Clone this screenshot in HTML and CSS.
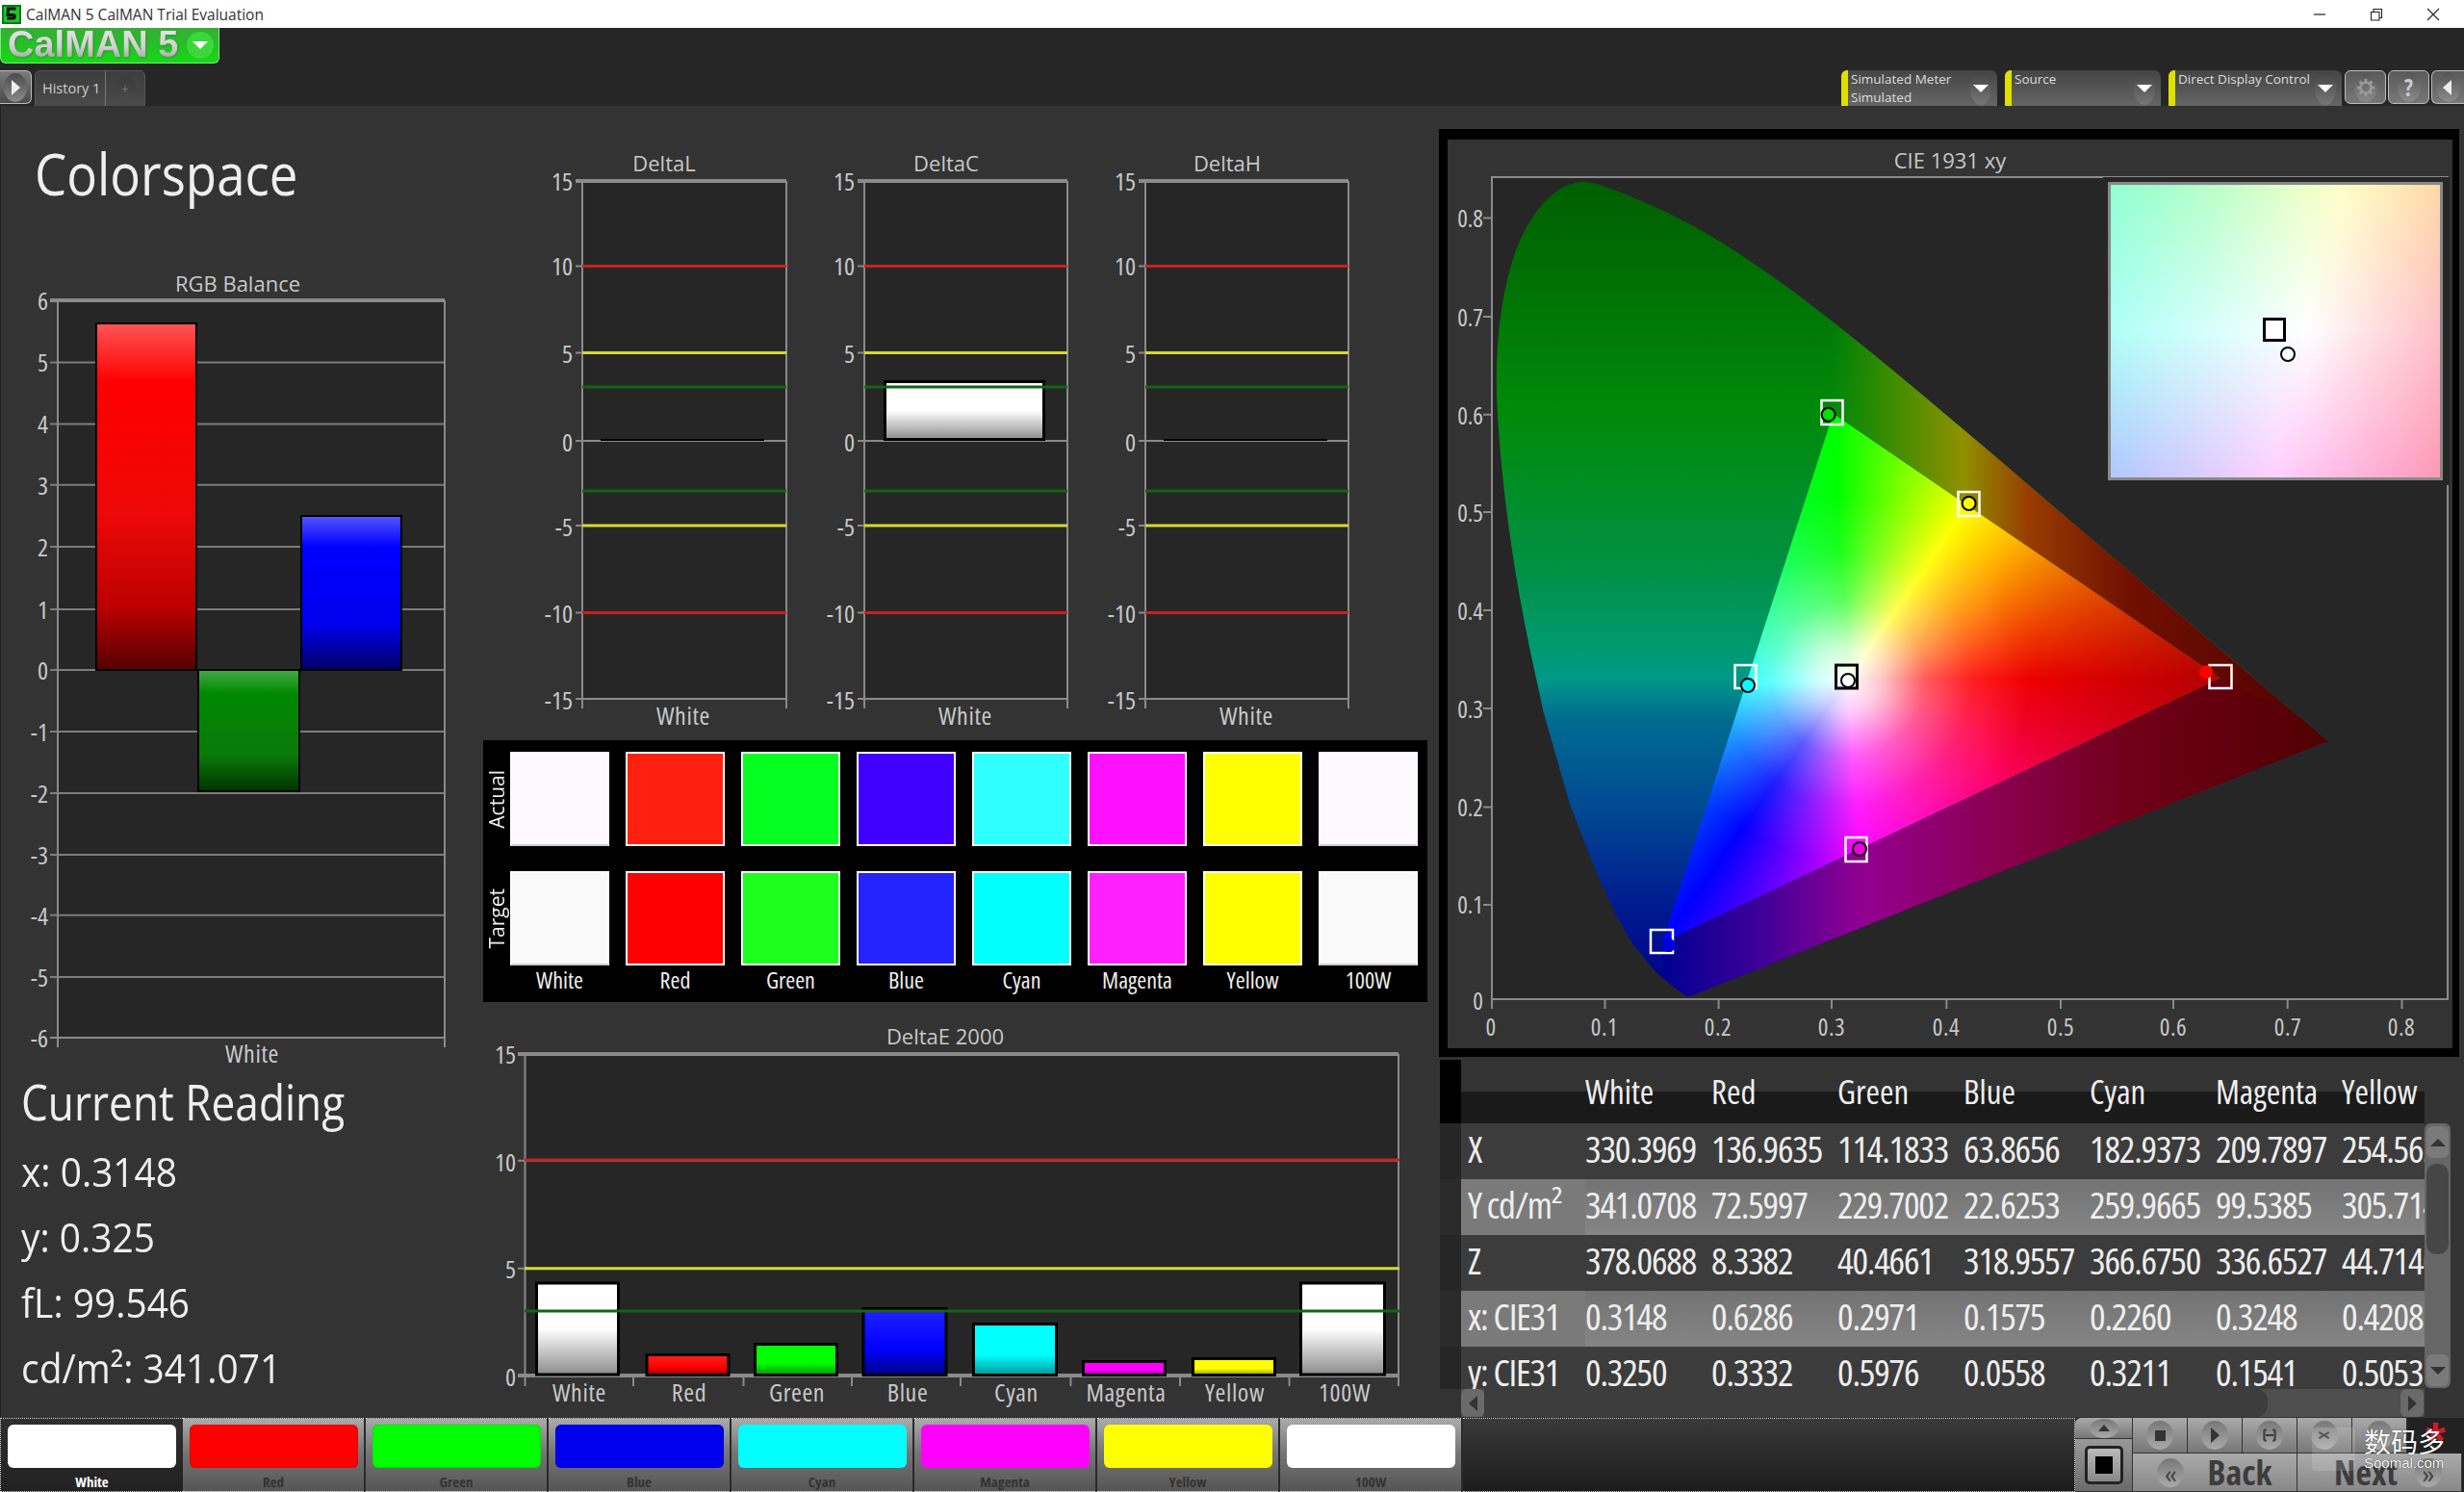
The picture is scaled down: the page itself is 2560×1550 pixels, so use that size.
FILE: index.html
```html
<!DOCTYPE html>
<html lang="en">
<head>
<meta charset="utf-8">
<title>CalMAN 5 CalMAN Trial Evaluation</title>
<link rel="stylesheet" href="styles.css">
</head>
<body>
<svg class="defs" aria-hidden="true">
  <defs>
    <linearGradient id="barRed" x1="0" y1="0" x2="0" y2="1"><stop offset="0" stop-color="#f55"/><stop offset=".17" stop-color="#f00"/><stop offset=".55" stop-color="#ee0808"/><stop offset=".82" stop-color="#b00"/><stop offset="1" stop-color="#500"/></linearGradient>
    <linearGradient id="barGreen" x1="0" y1="0" x2="0" y2="1"><stop offset="0" stop-color="#4a4"/><stop offset=".2" stop-color="#080"/><stop offset=".7" stop-color="#0a7a0a"/><stop offset="1" stop-color="#030"/></linearGradient>
    <linearGradient id="barBlue" x1="0" y1="0" x2="0" y2="1"><stop offset="0" stop-color="#55f"/><stop offset=".2" stop-color="#00f"/><stop offset=".7" stop-color="#00e"/><stop offset="1" stop-color="#006"/></linearGradient>
    <linearGradient id="barWhite" x1="0" y1="0" x2="0" y2="1"><stop offset="0" stop-color="#fff"/><stop offset=".5" stop-color="#fff"/><stop offset="1" stop-color="#8c8c8c"/></linearGradient>
    <linearGradient id="eRed" x1="0" y1="0" x2="0" y2="1"><stop offset="0" stop-color="#f22"/><stop offset=".6" stop-color="#f00"/><stop offset="1" stop-color="#900"/></linearGradient>
    <linearGradient id="eGreen" x1="0" y1="0" x2="0" y2="1"><stop offset="0" stop-color="#0f0"/><stop offset=".6" stop-color="#0f0"/><stop offset="1" stop-color="#090"/></linearGradient>
    <linearGradient id="eBlue" x1="0" y1="0" x2="0" y2="1"><stop offset="0" stop-color="#22f"/><stop offset=".6" stop-color="#00f"/><stop offset="1" stop-color="#008"/></linearGradient>
    <linearGradient id="eCyan" x1="0" y1="0" x2="0" y2="1"><stop offset="0" stop-color="#0ff"/><stop offset=".6" stop-color="#0ff"/><stop offset="1" stop-color="#099"/></linearGradient>
    <linearGradient id="eMag" x1="0" y1="0" x2="0" y2="1"><stop offset="0" stop-color="#f0f"/><stop offset=".6" stop-color="#f0f"/><stop offset="1" stop-color="#909"/></linearGradient>
    <linearGradient id="eYel" x1="0" y1="0" x2="0" y2="1"><stop offset="0" stop-color="#ff0"/><stop offset=".6" stop-color="#ff0"/><stop offset="1" stop-color="#990"/></linearGradient>

    <linearGradient id="ciLeft" gradientUnits="userSpaceOnUse" x1="0" y1="189" x2="0" y2="1035">
      <stop offset="0" stop-color="#005e00"/><stop offset=".285" stop-color="#008a0a"/><stop offset=".465" stop-color="#009040"/><stop offset=".575" stop-color="#009a70"/><stop offset=".61" stop-color="#009888"/><stop offset=".66" stop-color="#006c90"/><stop offset=".765" stop-color="#004a92"/><stop offset=".885" stop-color="#001c90"/><stop offset="1" stop-color="#000088"/>
    </linearGradient>
    <linearGradient id="ciUpper" gradientUnits="userSpaceOnUse" x1="1900" y1="0" x2="2420" y2="0">
      <stop offset="0" stop-color="#2a8a00" stop-opacity="0"/><stop offset=".12" stop-color="#3a8c00"/><stop offset=".27" stop-color="#909000"/><stop offset=".4" stop-color="#983c00"/><stop offset=".6" stop-color="#701000"/><stop offset="1" stop-color="#500000"/>
    </linearGradient>
    <linearGradient id="ciLower" gradientUnits="userSpaceOnUse" x1="1727" y1="0" x2="2420" y2="0">
      <stop offset="0" stop-color="#000090"/><stop offset=".15" stop-color="#40009a"/><stop offset=".3" stop-color="#920090"/><stop offset=".5" stop-color="#8c0050"/><stop offset=".7" stop-color="#700018"/><stop offset="1" stop-color="#500000"/>
    </linearGradient>
    <radialGradient id="redShade" gradientUnits="userSpaceOnUse" cx="2306.5" cy="704.4" r="260">
      <stop offset="0" stop-color="#000" stop-opacity=".3"/><stop offset="1" stop-color="#000" stop-opacity="0"/>
    </radialGradient>
    <clipPath id="locus">
      <path transform="translate(1550 1040) scale(1182 -1017)" d="M.1741 .005L.1714 .0051L.1644 .0109L.1566 .0177L.144 .0297L.1241 .0578L.1096 .0868L.0913 .1327L.0687 .2007L.0454 .295L.03445 .35385Q.0235 .4127 .01585 .47555Q.0082 .5384 .0051 .5966Q.002 .6548 .008 .7025Q.0139 .7502 .0264 .7811Q.0389 .812 .0566 .827Q.0743 .842 .09425 .834Q.1142 .8262 .13445 .816Q.1547 .8059 .1738 .79375Q.1929 .7816 .21125 .76795Q.2296 .7543 .2658 .7243L.3016 .6923L.3373 .6589L.3731 .6245L.4441 .5547L.5125 .4866L.5752 .4242L.627 .3725L.6658 .334L.6915 .3083L.719 .2809L.7347 .2653Z"/>
    </clipPath>
    <clipPath id="gamutClip">
      <polygon points="2306.5,704.4 1904.6,429.8 1727.3,979"/>
    </clipPath>
  </defs>
</svg>

<header class="titlebar">
  <svg class="app-icon" viewBox="0 0 20 20"><rect width="20" height="20" fill="#0a7a12"/><rect x="2" y="2" width="16" height="16" fill="#23c42b"/><path d="M14.5 4H6.5L6 10.5H11.5a1.8 1.8 0 0 1 0 3.6H5.5" fill="none" stroke="#04140a" stroke-width="3"/></svg>
  <span class="title-text">CalMAN 5 CalMAN Trial Evaluation</span>
  <div class="win-controls">
    <svg viewBox="0 0 14 14"><path d="M1 7H13" stroke="#222" stroke-width="1.2"/></svg>
    <svg viewBox="0 0 14 14"><path d="M1.5 4.5H10V13H1.5ZM4 4.5V1.5H12.5V10.5H10" fill="none" stroke="#222" stroke-width="1.1"/></svg>
    <svg viewBox="0 0 14 14"><path d="M1 1L13 13M13 1L1 13" stroke="#222" stroke-width="1.1"/></svg>
  </div>
</header>

<section class="topbar">
  <div class="top-left">
    <div class="logo">
      <span class="logo-text">CalMAN 5</span>
      <span class="drop-round"><span class="tri-down"></span></span>
    </div>
    <div class="tabs">
      <div class="round-tab play-tab"><span class="knob"><span class="tri-right"></span></span></div>
      <div class="history-tab">
        <span class="history-name">History 1</span>
        <span class="history-add"><span class="knob small">+</span></span>
      </div>
    </div>
  </div>
  <div class="top-tools">
    <div class="tool-select w162"><span class="tool-flag"></span><span class="tool-text">Simulated Meter<br>Simulated</span><span class="knob"><span class="tri-down"></span></span></div>
    <div class="tool-select w162"><span class="tool-flag"></span><span class="tool-text">Source</span><span class="knob"><span class="tri-down"></span></span></div>
    <div class="tool-select w180"><span class="tool-flag"></span><span class="tool-text">Direct Display Control</span><span class="knob"><span class="tri-down"></span></span></div>
    <div class="icon-btn"><span class="knob"><svg viewBox="0 0 24 24" class="gear"><circle cx="12" cy="12" r="6" fill="none" stroke="#999" stroke-width="3"/><path d="M12 2V6M12 18V22M2 12H6M18 12H22M5 5L8 8M16 16L19 19M19 5L16 8M8 16L5 19" stroke="#999" stroke-width="3"/></svg></span></div>
    <div class="icon-btn"><span class="knob qmark">?</span></div>
    <div class="icon-btn last"><span class="knob"><span class="tri-left"></span></span></div>
  </div>
</section>

<main class="main">
  <section class="col-left">
    <h1 class="page-title">Colorspace</h1>
    <svg class="chart" viewBox="0 270 500 840" width="500" height="840">
      <text class="c-title" x="247" y="303">RGB Balance</text>
      <rect class="plot" x="60" y="312" width="402" height="766"/>
      <path class="grid" d="M52 376.4H462M52 440.6H462M52 503.7H462M52 567.9H462M52 633H462M52 696H462M52 760H462M52 824H462M52 888H462M52 950.7H462M52 1015H462"/>
      <path class="frame" d="M52 1078H462M60 312V1088M462 312V1088"/>
      <path class="frame top" d="M52 312H462"/>
      <rect class="bar" x="100" y="336" width="104" height="360" fill="url(#barRed)"/>
      <rect class="bar" x="206" y="696" width="105" height="126" fill="url(#barGreen)"/>
      <rect class="bar" x="313" y="536" width="104" height="160" fill="url(#barBlue)"/>
      <text class="tick" x="50" y="322">6</text>
      <text class="tick" x="50" y="386">5</text>
      <text class="tick" x="50" y="450">4</text>
      <text class="tick" x="50" y="514">3</text>
      <text class="tick" x="50" y="578">2</text>
      <text class="tick" x="50" y="643">1</text>
      <text class="tick" x="50" y="706">0</text>
      <text class="tick" x="50" y="770">-1</text>
      <text class="tick" x="50" y="834">-2</text>
      <text class="tick" x="50" y="898">-3</text>
      <text class="tick" x="50" y="961">-4</text>
      <text class="tick" x="50" y="1025">-5</text>
      <text class="tick" x="50" y="1088">-6</text>
      <text class="x-label" x="262" y="1104">White</text>
    </svg>
    <h2 class="reading-title">Current Reading</h2>
    <ul class="reading">
      <li>x: 0.3148</li>
      <li>y: 0.325</li>
      <li>fL: 99.546</li>
      <li>cd/m²: 341.071</li>
    </ul>
  </section>

  <section class="col-mid">
    <svg class="chart" viewBox="500 110 990 659" width="990" height="659">
      <g>
        <text class="c-title" x="690" y="178">DeltaL</text>
        <rect class="plot" x="605" y="188" width="212" height="538"/>
        <path class="frame" d="M598 276.4H605M598 366.6H605M598 458H817M598 636.6H605M598 546H605M598 726H817M605 188V736M817 188V736"/>
        <path class="frame top" d="M598 188H817"/>
        <path class="stk-red" d="M605 276.4H817M605 636.6H817"/>
        <path class="stk-yel" d="M605 366.6H817M605 546H817"/>
        <path class="stk-grn" d="M605 402H817M605 510H817"/>
        <path class="stk-blk" d="M624 457H794"/>
        <text class="tick" x="595" y="198">15</text>
        <text class="tick" x="595" y="286">10</text>
        <text class="tick" x="595" y="377">5</text>
        <text class="tick" x="595" y="469">0</text>
        <text class="tick" x="595" y="557">-5</text>
        <text class="tick" x="595" y="647">-10</text>
        <text class="tick" x="595" y="737">-15</text>
        <text class="x-label" x="710" y="753">White</text>
      </g>
      <g>
        <text class="c-title" x="983" y="178">DeltaC</text>
        <rect class="plot" x="898" y="188" width="211" height="538"/>
        <path class="frame" d="M891 276.4H898M891 366.6H898M891 458H1109M891 636.6H898M891 546H898M891 726H1109M898 188V736M1109 188V736"/>
        <path class="frame top" d="M891 188H1109"/>
        <rect class="bar thick" x="919.5" y="396.5" width="165" height="60" fill="url(#barWhite)"/>
        <path class="stk-red" d="M898 276.4H1109M898 636.6H1109"/>
        <path class="stk-yel" d="M898 366.6H1109M898 546H1109"/>
        <path class="stk-grn" d="M898 402H1109M898 510H1109"/>
        <text class="tick" x="888" y="198">15</text>
        <text class="tick" x="888" y="286">10</text>
        <text class="tick" x="888" y="377">5</text>
        <text class="tick" x="888" y="469">0</text>
        <text class="tick" x="888" y="557">-5</text>
        <text class="tick" x="888" y="647">-10</text>
        <text class="tick" x="888" y="737">-15</text>
        <text class="x-label" x="1003" y="753">White</text>
      </g>
      <g>
        <text class="c-title" x="1275" y="178">DeltaH</text>
        <rect class="plot" x="1190" y="188" width="211" height="538"/>
        <path class="frame" d="M1183 276.4H1190M1183 366.6H1190M1183 458H1401M1183 636.6H1190M1183 546H1190M1183 726H1401M1190 188V736M1401 188V736"/>
        <path class="frame top" d="M1183 188H1401"/>
        <path class="stk-red" d="M1190 276.4H1401M1190 636.6H1401"/>
        <path class="stk-yel" d="M1190 366.6H1401M1190 546H1401"/>
        <path class="stk-grn" d="M1190 402H1401M1190 510H1401"/>
        <path class="stk-blk" d="M1209 457H1379"/>
        <text class="tick" x="1180" y="198">15</text>
        <text class="tick" x="1180" y="286">10</text>
        <text class="tick" x="1180" y="377">5</text>
        <text class="tick" x="1180" y="469">0</text>
        <text class="tick" x="1180" y="557">-5</text>
        <text class="tick" x="1180" y="647">-10</text>
        <text class="tick" x="1180" y="737">-15</text>
        <text class="x-label" x="1295" y="753">White</text>
      </g>
    </svg>

    <div class="swatches">
      <div class="sw-side sw-side-a"><span class="sw-rot">Actual</span></div>
      <div class="sw sw-a1"></div><div class="sw sw-a2"></div><div class="sw sw-a3"></div><div class="sw sw-a4"></div><div class="sw sw-a5"></div><div class="sw sw-a6"></div><div class="sw sw-a7"></div><div class="sw sw-a8"></div>
      <div class="sw-side sw-side-t"><span class="sw-rot">Target</span></div>
      <div class="sw sw-t1"></div><div class="sw sw-t2"></div><div class="sw sw-t3"></div><div class="sw sw-t4"></div><div class="sw sw-t5"></div><div class="sw sw-t6"></div><div class="sw sw-t7"></div><div class="sw sw-t8"></div>
      <span class="sw-spacer"></span>
      <span class="sw-label">White</span><span class="sw-label">Red</span><span class="sw-label">Green</span><span class="sw-label">Blue</span><span class="sw-label">Cyan</span><span class="sw-label">Magenta</span><span class="sw-label">Yellow</span><span class="sw-label">100W</span>
    </div>

    <svg class="chart" viewBox="500 1041 990 432" width="990" height="432">
      <text class="c-title" x="982" y="1085">DeltaE 2000</text>
      <rect class="plot" x="545.5" y="1095" width="907.5" height="334"/>
      <path class="frame" d="M538 1205.7H1453M538 1317.7H545M545.5 1095V1429M1453 1095V1429"/>
      <path class="frame top" d="M538 1095H1453M538 1429H1453"/>
      <path class="frame" d="M545.5 1429V1440M658 1429V1440M772.5 1429V1440M885 1429V1440M998 1429V1440M1112.5 1429V1440M1226 1429V1440M1339.5 1429V1440M1453 1429V1440"/>
      <rect class="bar thick" x="557.5" y="1333" width="85" height="95" fill="url(#barWhite)"/>
      <rect class="bar thick" x="672" y="1407.5" width="85" height="21" fill="url(#eRed)"/>
      <rect class="bar thick" x="784.5" y="1396.5" width="85" height="32" fill="url(#eGreen)"/>
      <rect class="bar thick" x="897" y="1359.5" width="86" height="69" fill="url(#eBlue)"/>
      <rect class="bar thick" x="1011.5" y="1375.5" width="86" height="53" fill="url(#eCyan)"/>
      <rect class="bar thick" x="1125.5" y="1414.5" width="85" height="14" fill="url(#eMag)"/>
      <rect class="bar thick" x="1239.5" y="1411.5" width="85" height="17" fill="url(#eYel)"/>
      <rect class="bar thick" x="1351.5" y="1333" width="87" height="95" fill="url(#barWhite)"/>
      <path class="stk-red" d="M545 1205H1454"/>
      <path class="stk-yel" d="M545 1317.7H1454"/>
      <path class="stk-grn" d="M545 1362H1454"/>
      <text class="tick" x="536" y="1105">15</text>
      <text class="tick" x="536" y="1217">10</text>
      <text class="tick" x="536" y="1328">5</text>
      <text class="tick" x="536" y="1440">0</text>
      <text class="x-label" x="602" y="1456">White</text>
      <text class="x-label" x="716" y="1456">Red</text>
      <text class="x-label" x="828" y="1456">Green</text>
      <text class="x-label" x="943" y="1456">Blue</text>
      <text class="x-label" x="1056" y="1456">Cyan</text>
      <text class="x-label" x="1170" y="1456">Magenta</text>
      <text class="x-label" x="1283" y="1456">Yellow</text>
      <text class="x-label" x="1397" y="1456">100W</text>
    </svg>
  </section>

  <section class="col-right">
    <div class="cie-panel">
      <svg class="chart" viewBox="1504 145 1044 944" width="1044" height="944">
        <text class="c-title" x="2026" y="175">CIE 1931 xy</text>
        <rect class="plot" x="1550" y="184" width="993" height="854"/>
        <path class="frame" d="M1550 184H2543V1038H1550ZM1541 226.4H1550M1541 329H1550M1541 430.7H1550M1541 532H1550M1541 634H1550M1541 736H1550M1541 838.5H1550M1541 940H1550M1550 1038V1048M1667.5 1038V1048M1785.6 1038V1048M1903 1038V1048M2022.4 1038V1048M2141 1038V1048M2258 1038V1048M2376.7 1038V1048M2495.5 1038V1048"/>
        <g clip-path="url(#locus)">
          <rect x="1540" y="180" width="900" height="870" fill="url(#ciLeft)"/>
          <polygon points="1904.6,429.8 2306.5,704.4 2440,790 2440,180 1904.6,180" fill="url(#ciUpper)"/>
          <polygon points="1727.3,979 2306.5,704.4 2440,770 2440,1050 1727.3,1050" fill="url(#ciLower)"/>
        </g>
        <foreignObject x="1720" y="420" width="600" height="570" clip-path="url(#gamutClip)">
          <div xmlns="http://www.w3.org/1999/xhtml" class="gamut-fill"></div>
        </foreignObject>
        <polygon points="2306.5,704.4 1904.6,429.8 1727.3,979" fill="url(#redShade)"/>
        <rect class="mk-w" x="1892.5" y="416" width="22" height="25"/>
        <rect class="mk-w" x="2034.5" y="511" width="22" height="25"/>
        <rect class="mk-w" x="1802.5" y="691" width="22" height="24"/>
        <rect class="mk-b" x="1907.5" y="691" width="22" height="24"/>
        <rect class="mk-w" x="2295.5" y="691" width="23" height="24"/>
        <rect class="mk-w" x="1917.5" y="870" width="22" height="25"/>
        <rect class="mk-w" x="1715" y="966" width="23" height="24"/>
        <circle class="mk-c" cx="1899.6" cy="430.7" r="7" fill="#0d0"/>
        <circle class="mk-c" cx="2045.6" cy="523" r="7" fill="#ff0"/>
        <circle class="mk-c" cx="1816" cy="712" r="7" fill="#0ff"/>
        <circle class="mk-c" cx="1920" cy="707" r="7" fill="#fff"/>
        <circle class="mk-c mk-r" cx="2292" cy="698" r="7" fill="#f00"/>
        <circle class="mk-c" cx="1932" cy="882" r="7" fill="#e0d"/>
        <circle class="mk-c mk-r" cx="1734" cy="982" r="7" fill="#00d"/>
        <text class="tick sm" x="1541" y="236">0.8</text>
        <text class="tick sm" x="1541" y="339">0.7</text>
        <text class="tick sm" x="1541" y="441">0.6</text>
        <text class="tick sm" x="1541" y="542">0.5</text>
        <text class="tick sm" x="1541" y="644">0.4</text>
        <text class="tick sm" x="1541" y="746">0.3</text>
        <text class="tick sm" x="1541" y="848">0.2</text>
        <text class="tick sm" x="1541" y="949">0.1</text>
        <text class="tick sm" x="1541" y="1049">0</text>
        <text class="x-label sm" x="1549" y="1076">0</text>
        <text class="x-label sm" x="1667" y="1076">0.1</text>
        <text class="x-label sm" x="1785" y="1076">0.2</text>
        <text class="x-label sm" x="1903" y="1076">0.3</text>
        <text class="x-label sm" x="2022" y="1076">0.4</text>
        <text class="x-label sm" x="2141" y="1076">0.5</text>
        <text class="x-label sm" x="2258" y="1076">0.6</text>
        <text class="x-label sm" x="2377" y="1076">0.7</text>
        <text class="x-label sm" x="2495" y="1076">0.8</text>
      </svg>
      <div class="inset">
        <div class="inset-field">
          <span class="inset-sq"></span>
          <span class="inset-dot"></span>
        </div>
      </div>
    </div>

    <div class="table-area">
      <div class="table-main">
        <table class="data">
          <thead><tr><th></th><th>White</th><th>Red</th><th>Green</th><th>Blue</th><th>Cyan</th><th>Magenta</th><th>Yellow</th></tr></thead>
          <tbody>
            <tr><td>X</td><td>330.3969</td><td>136.9635</td><td>114.1833</td><td>63.8656</td><td>182.9373</td><td>209.7897</td><td>254.5632</td></tr>
            <tr><td>Y cd/m²</td><td>341.0708</td><td>72.5997</td><td>229.7002</td><td>22.6253</td><td>259.9665</td><td>99.5385</td><td>305.7141</td></tr>
            <tr><td>Z</td><td>378.0688</td><td>8.3382</td><td>40.4661</td><td>318.9557</td><td>366.6750</td><td>336.6527</td><td>44.7140</td></tr>
            <tr><td>x: CIE31</td><td>0.3148</td><td>0.6286</td><td>0.2971</td><td>0.1575</td><td>0.2260</td><td>0.3248</td><td>0.4208</td></tr>
            <tr><td>y: CIE31</td><td>0.3250</td><td>0.3332</td><td>0.5976</td><td>0.0558</td><td>0.3211</td><td>0.1541</td><td>0.5053</td></tr>
          </tbody>
        </table>
      </div>
      <div class="vscroll">
        <div class="vtrack">
          <span class="sb-btn"><span class="tri-up dark"></span></span>
          <span class="sb-thumb"></span>
          <span class="sb-btn last"><span class="tri-down dark"></span></span>
        </div>
      </div>
      <div class="hscroll">
        <span class="sb-btn h"><span class="tri-left dark"></span></span>
        <span class="sb-thumb h"></span>
        <span class="sb-btn h"><span class="tri-right dark"></span></span>
      </div>
    </div>
  </section>
</main>

<footer class="bottombar">
  <div class="patch active"><span class="patch-color pc-white"></span><span class="patch-name">White</span></div>
  <div class="patch"><span class="patch-color pc-red"></span><span class="patch-name">Red</span></div>
  <div class="patch"><span class="patch-color pc-green"></span><span class="patch-name">Green</span></div>
  <div class="patch"><span class="patch-color pc-blue"></span><span class="patch-name">Blue</span></div>
  <div class="patch"><span class="patch-color pc-cyan"></span><span class="patch-name">Cyan</span></div>
  <div class="patch"><span class="patch-color pc-magenta"></span><span class="patch-name">Magenta</span></div>
  <div class="patch"><span class="patch-color pc-yellow"></span><span class="patch-name">Yellow</span></div>
  <div class="patch"><span class="patch-color pc-white"></span><span class="patch-name">100W</span></div>
  <div class="bottom-fill"></div>
  <div class="controls">
    <div class="ctl ctl-up"><span class="knob small"><span class="tri-up dark"></span></span></div>
    <div class="ctl ctl-stop"><span class="stop-outer"><span class="stop-inner"></span></span></div>
    <div class="ctl-top">
      <div class="ctl"><span class="knob mid"><span class="glyph-stop"></span></span></div>
      <div class="ctl"><span class="knob mid"><span class="tri-right dark"></span></span></div>
      <div class="ctl"><span class="knob mid"><svg viewBox="0 0 20 20" class="glyph"><path d="M3 3H6M3 17H6M3 3V17M17 3V17M14 3H17M14 17H17M5 10H15" fill="none" stroke="#3a3a3a" stroke-width="2.5"/></svg></span></div>
      <div class="ctl"><span class="knob mid"><svg viewBox="0 0 20 20" class="glyph"><path d="M3 6L16 14M3 14L16 6" fill="none" stroke="#3a3a3a" stroke-width="2.5"/></svg></span></div>
      <div class="ctl"><span class="knob mid"></span></div>
    </div>
    <div class="ctl-nav">
      <div class="ctl nav"><span class="knob mid dbl">«</span><span class="nav-text">Back</span></div>
      <div class="ctl nav next"><span class="nav-text">Next</span><span class="knob mid dbl">»</span></div>
    </div>
  </div>
  <div class="watermark">
    <span class="wm-box"></span>
    <span class="wm-star">*</span>
    <span class="wm-cn">数码多</span>
    <span class="wm-en">Soomal.com</span>
  </div>
</footer>
</body>
</html>
```
FILE: styles.css
```css
* { box-sizing: border-box; }
html, body { margin: 0; padding: 0; }
body {
  width: 2560px;
  height: 1550px;
  overflow: hidden;
  position: relative;
  display: flex;
  flex-direction: column;
  background: #262626;
  font-family: "Open Sans", "Noto Sans", "Liberation Sans", sans-serif;
  font-stretch: 75%;
  color: #ddd;
}
.defs { position: absolute; width: 0; height: 0; }

/* title bar */
.titlebar { height: 29px; flex: none; background: #fff; display: flex; align-items: center; padding-left: 2px; }
.app-icon { width: 20px; height: 20px; }
.title-text { margin-left: 5px; font-size: 15.5px; font-stretch: 100%; color: #333; font-family: "Open Sans", sans-serif; }
.win-controls { margin-left: auto; display: flex; gap: 45px; padding-right: 25px; }
.win-controls svg { width: 14px; height: 14px; display: block; }

/* top bar */
.topbar { height: 81px; flex: none; display: flex; justify-content: space-between; align-items: flex-end; }
.top-left { display: flex; flex-direction: column; gap: 7px; }
.logo {
  width: 228px; height: 37px; display: flex; align-items: center; padding-left: 7px;
  border-radius: 0 0 6px 6px; border: 1px solid #7fe87f; border-top: 0;
  background: linear-gradient(#37ad37, #23c423 60%, #13dc13);
}
.logo-text {
  font-family: "Liberation Sans", sans-serif; font-stretch: 100%; font-weight: 700; font-size: 38px; line-height: 32px; padding-bottom: 3px;
  color: transparent; background: linear-gradient(#e4e4e4, #d0d0d0 55%, #8e9e8e); -webkit-background-clip: text; background-clip: text;
  filter: drop-shadow(1px 1px 1px #3c8a3c); width: 176px; white-space: nowrap;
}
.drop-round { width: 28px; height: 28px; margin-left: 10px; border-radius: 50%; background: #3bd83b; display: flex; align-items: center; justify-content: center; }
.tri-down, .tri-up, .tri-left, .tri-right { display: block; width: 0; height: 0; border-style: solid; border-color: transparent; }
.tri-down { border-width: 8px 8px 0; border-top-color: #fff; }
.tri-up { border-width: 0 8px 8px; border-bottom-color: #fff; }
.tri-left { border-width: 8px 9px 8px 0; border-right-color: #eee; }
.tri-right { border-width: 8px 0 8px 9px; border-left-color: #eee; }
.tri-down.dark { border-top-color: #333; }
.tri-up.dark { border-bottom-color: #333; }
.tri-left.dark { border-right-color: #333; }
.tri-right.dark { border-left-color: #333; }

.tabs { display: flex; gap: 3px; height: 37px; align-items: flex-start; }
.round-tab { width: 33px; height: 35px; display: flex; align-items: center; justify-content: center; border: 1px solid #bbb; border-left: 0; border-radius: 0 6px 6px 0; background: linear-gradient(#7c7c7c, #4c4c4c); }
.knob { width: 24px; height: 30px; border-radius: 50%; flex: none; display: flex; align-items: center; justify-content: center; background: linear-gradient(#4a4a4a, #8a8a8a); }
.history-tab { height: 37px; width: 115px; display: flex; border: 1px solid #555; border-bottom: 0; border-radius: 6px 6px 0 0; background: linear-gradient(#3d3d3d, #4a4a4a); }
.history-name { width: 73px; flex: none; padding: 8px 0 0 7px; font-size: 14.5px; color: #ccc; white-space: nowrap; font-stretch: 100%; border-right: 1px solid #777; }
.history-add { flex: 1; display: flex; align-items: center; justify-content: center; }
.knob.small { width: 22px; height: 24px; font-size: 14px; color: #777; background: linear-gradient(#3a3a3a, #4a4a4a); }

.top-tools { display: flex; align-items: flex-start; height: 37px; }
.tool-select { height: 37px; margin-right: 8px; display: flex; align-items: center; position: relative; background: linear-gradient(#444, #666); border-radius: 7px 7px 0 0; padding-left: 10px; }
.w162 { width: 162px; }
.w180 { width: 180px; margin-right: 3px; }
.tool-flag { position: absolute; left: 0; top: 0; bottom: 0; width: 7px; background: #e0e000; border-radius: 6px 0 0 0; }
.tool-text { flex: 1; font-size: 13.5px; font-stretch: 92%; line-height: 18.5px; color: #ddd; white-space: nowrap; align-self: flex-start; margin-top: 0; overflow: hidden; }
.tool-select .knob { margin: 0 6px 0 0; background: linear-gradient(#444, #777); height: 34px; width: 22px; }
.icon-btn { width: 43px; height: 35px; margin-right: 2px; display: flex; align-items: center; justify-content: center; border: 1px solid #bbb; border-radius: 6px; background: linear-gradient(#5a5a5a, #777); }
.icon-btn.last { width: 34px; margin-right: 0; border-right: 0; border-radius: 6px 0 0 6px; }
.icon-btn .knob { background: linear-gradient(#555, #8c8c8c); }
.icon-btn .knob .tri-left { margin-left: -2px; }
.gear { width: 22px; height: 22px; }
.qmark { font-size: 24px; font-weight: 700; color: #ccc; }

/* main */
.main {
  height: 1363px; flex: none; display: grid; grid-template-columns: 500px 990px 1070px;
  background: #333; box-shadow: inset 1px 0 #222;
}
.col-left, .col-mid, .col-right { position: relative; min-width: 0; }
.page-title { margin: 0; height: 160px; padding: 40px 0 0 36px; font-weight: 400; font-size: 60px; font-stretch: 88%; line-height: 60px; color: #eee; transform: scaleX(.88); transform-origin: 36px 0; }
.chart { display: block; }
.chart text { font-family: "Open Sans", "Noto Sans", sans-serif; font-stretch: 75%; }
.plot { fill: #262626; }
.grid { stroke: #7c7c7c; stroke-width: 2; fill: none; }
.frame { stroke: #8a8a8a; stroke-width: 2; fill: none; }
.frame.top { stroke-width: 4; }
.bar { stroke: #000; stroke-width: 2; }
.bar.thick { stroke-width: 3; }
.chart .c-title { fill: #c8c8c8; font-size: 22px; font-stretch: 88%; text-anchor: middle; }
.tick { fill: #c8c8c8; font-size: 26px; text-anchor: end; }
.x-label { fill: #c8c8c8; font-size: 26px; letter-spacing: .6px; text-anchor: middle; }
.tick.sm, .x-label.sm { font-size: 25px; }
.stk-red { stroke: #c82020; stroke-width: 3; fill: none; }
.stk-yel { stroke: #d8d830; stroke-width: 3; fill: none; }
.stk-grn { stroke: #146414; stroke-width: 3; fill: none; }
.stk-blk { stroke: #000; stroke-width: 2; fill: none; }

.reading-title { margin: 4px 0 0 0; padding-left: 22px; font-weight: 400; font-size: 52px; font-stretch: 88%; line-height: 60px; color: #eee; transform: scaleX(.85); transform-origin: 22px 0; }
.reading { list-style: none; margin: 9px 0 0 0; padding: 0 0 0 22px; }
.reading li { font-size: 42px; font-stretch: 88%; line-height: 68px; color: #eee; transform: scaleX(.926); transform-origin: 0 0; }

/* swatches */
.swatches {
  width: 981px; height: 272px; margin-left: 2px; background: #000;
  display: grid; grid-template-columns: 28px repeat(8, 120px);
  grid-template-rows: 98px 26px 98px 1fr; padding-top: 12px; align-content: start;
}
.sw-side { display: flex; align-items: center; justify-content: center; grid-column: 1; }
.sw-side-a { grid-row: 1; }
.sw-side-t { grid-row: 3; }
.sw-rot { writing-mode: vertical-rl; transform: rotate(180deg); font-size: 21px; font-weight: 400; color: #eee; font-stretch: 100%; }
.sw { border: 2px solid #fff; margin-right: 17px; }
.sw-a1, .sw-a8 { grid-row: 1; background: #fdf9fc; border-bottom-color: #ccc; }
.sw-a2 { grid-row: 1; background: #ff2010; }
.sw-a3 { grid-row: 1; background: #05ff20; }
.sw-a4 { grid-row: 1; background: #4000ff; }
.sw-a5 { grid-row: 1; background: #30ffff; }
.sw-a6 { grid-row: 1; background: #ff10ff; }
.sw-a7 { grid-row: 1; background: #ffff00; }
.sw-t1, .sw-t8 { grid-row: 3; background: #f9f9f9; border-bottom-color: #ccc; }
.sw-t2 { grid-row: 3; background: #ff0000; }
.sw-t3 { grid-row: 3; background: #1fff1f; }
.sw-t4 { grid-row: 3; background: #2424ff; }
.sw-t5 { grid-row: 3; background: #00ffff; }
.sw-t6 { grid-row: 3; background: #ff20ff; }
.sw-t7 { grid-row: 3; background: #ffff00; }
.sw-spacer { grid-row: 4; grid-column: 1; }
.sw-label { grid-row: 4; padding-right: 17px; text-align: center; font-size: 24px; line-height: 30px; color: #eee; }

/* right */
.cie-panel {
  position: relative; width: 1060px; height: 964px; margin: 24px 0 0 5px; background: #000; padding: 11px 7px 9px 9px;
}
.cie-panel .chart { background: #333; height: 944px; }
.gamut-fill {
  width: 600px; height: 570px;
  background:
    radial-gradient(circle at 199.6px 285.4px, #fff 0, rgba(255,255,255,.78) 35px, rgba(255,255,255,.36) 80px, rgba(255,255,255,.12) 130px, rgba(255,255,255,0) 190px),
    conic-gradient(from -3.1deg at 199.6px 285.4px, #0f0 0deg, #ff0 37.8deg, #f00 93deg, #f0f 179.2deg, #00f 218.2deg, #0ff 269.8deg, #0f0 360deg);
}
.mk-w { fill: none; stroke: #fff; stroke-width: 2.5; }
.mk-b { fill: none; stroke: #000; stroke-width: 3; }
.mk-c { stroke: #000; stroke-width: 2; }
.mk-c.mk-r { stroke: none; }
.inset {
  position: absolute; left: 690px; top: 50px; width: 360px; height: 320px;
  border: solid #262626; border-width: 5px 7px 5px 5px;
}
.inset-field {
  position: relative; height: 100%; border: 3px solid #888; overflow: hidden;
  background: linear-gradient(to right, #b0fff8, #ffffff 60%, #ffc0c8);
}
.inset-field::before, .inset-field::after { content: ""; position: absolute; inset: 0; }
.inset-field::before {
  background: linear-gradient(to right, #90ffd0, #b8ffc8 30%, #ffffc8 70%, #ffd8a8);
  -webkit-mask-image: linear-gradient(to bottom, #000, transparent 50%);
  mask-image: linear-gradient(to bottom, #000, transparent 50%);
}
.inset-field::after {
  background: linear-gradient(to right, #b0c8ff, #ffd0ff 50%, #ff98b8);
  -webkit-mask-image: linear-gradient(to bottom, transparent 50%, #000);
  mask-image: linear-gradient(to bottom, transparent 50%, #000);
}
.inset-sq { position: absolute; z-index: 1; left: 158px; top: 138px; width: 24px; height: 25px; border: 3px solid #000; background: #fff; }
.inset-dot { position: absolute; z-index: 1; left: 176px; top: 168px; width: 16px; height: 16px; border: 2px solid #000; border-radius: 50%; background: #fff; }

.table-area {
  display: grid; grid-template-columns: 1023px 27px; grid-template-rows: 342px 29px;
  height: 375px; padding-top: 3px; margin-left: 6px; width: 1050px;
}
.table-main { overflow: hidden; background: #2a2a2a; }
.data { border-collapse: collapse; table-layout: fixed; width: 1068px; }
.data th:first-child, .data td:first-child { width: 151px; padding-left: 29px; }
.data th, .data td { width: 131px; padding: 0; text-align: left; white-space: nowrap; overflow: hidden; font-weight: 400; color: #eee; letter-spacing: -1.2px; }
.data th { height: 66px; font-size: 35px; letter-spacing: 0; background: linear-gradient(#333 50%, #1a1a1a 50%); line-height: 60px; vertical-align: middle; }
.data th:first-child { background: linear-gradient(to right, #000 22px, transparent 22px), linear-gradient(#333 50%, #1a1a1a 50%); }
.data td { height: 58px; font-size: 39px; line-height: 52px; padding-bottom: 6px; background: #3c3c3c; }
.data tr:nth-child(even) td { background: linear-gradient(#737373, #858585); }
.data td:first-child { background: linear-gradient(to right, #262626 22px, #3c3c3c 22px); }
.data tr:nth-child(even) td:first-child { background: linear-gradient(to right, #2a2a2a 22px, #7a7a7a 22px); }
.vscroll { padding-top: 66px; }
.vtrack { height: 275px; display: flex; flex-direction: column; padding: 3px 2px 2px; background: #666; border-radius: 6px; }
.sb-btn { flex: none; height: 33px; display: flex; align-items: center; justify-content: center; background: #7a7a7a; border-radius: 6px; }
.sb-btn.last { margin-top: auto; }
.vtrack .sb-thumb { flex: none; height: 94px; margin-top: 6px; background: #464646; border-radius: 10px; }
.hscroll { grid-column: 1; display: flex; background: #4e4e4e content-box; padding-left: 22px; }
.sb-btn.h { width: 24px; height: 29px; background: #6a6a6a; }
.sb-thumb.h { flex: none; width: 814px; background: #3d3d3d; border-radius: 0 12px 12px 0; margin-right: 138px; }

/* bottom */
.bottombar { height: 77px; flex: none; display: flex; position: relative; background: #222; }
.patch {
  width: 190px; flex: none; display: flex; flex-direction: column; align-items: center; padding-top: 6px;
  background: linear-gradient(#aaa, #777 45%, #555); border-right: 2px solid #2a2a2a; border-top: 1px dotted #ddd; border-bottom: 1px dotted #ddd;
}
.patch.active { background: linear-gradient(#2e2e2e, #222); border: 1px dotted #ddd; border-right: 0; width: 190px; }
.patch-color { width: 175px; height: 45px; border-radius: 6px; }
.pc-white { background: #fff; }
.pc-red { background: #f00; box-shadow: inset 0 0 2px #a00; }
.pc-green { background: #0f0; box-shadow: inset 0 0 2px #0a0; }
.pc-blue { background: #00e; box-shadow: inset 0 0 2px #008; }
.pc-cyan { background: #0ff; }
.pc-magenta { background: #f0f; }
.pc-yellow { background: #ff0; }
.patch-name { margin-top: 4px; font-size: 15px; line-height: 20px; font-weight: 700; color: #333; }
.patch.active .patch-name { color: #fff; }
.bottom-fill { flex: 1; background: linear-gradient(#3a3a3a, #1c1c1c); border: 1px dotted #ddd; border-left: 0; }
.controls { width: 404px; flex: none; display: grid; grid-template-columns: 60px 1fr; grid-template-rows: 37px 40px; position: relative; }
.ctl { display: flex; align-items: center; justify-content: center; background: linear-gradient(#aaa, #777); border-right: 1px solid #333; border-bottom: 1px solid #333; }
.ctl-up { position: absolute; left: 0; top: 0; width: 60px; height: 22px; border-radius: 6px 0 0 0; }
.ctl-up .knob.small { background: linear-gradient(#777, #aaa); height: 20px; width: 30px; }
.ctl-up .tri-up { border-width: 0 6px 7px; }
.ctl-stop { position: absolute; left: 0; top: 22px; width: 60px; height: 55px; background: linear-gradient(#999, #6a6a6a); }
.stop-outer { width: 40px; height: 40px; border: 3px solid #222; border-radius: 5px; background: linear-gradient(#bbb, #888); display: flex; align-items: center; justify-content: center; }
.stop-inner { width: 18px; height: 18px; background: #000; }
.ctl-top { grid-column: 2; grid-row: 1; display: grid; grid-template-columns: repeat(5, 57px) 1fr; }
.knob.mid { width: 28px; height: 30px; background: linear-gradient(#777, #aaa); }
.glyph-stop { width: 11px; height: 11px; background: #333; }
.glyph { width: 16px; height: 16px; }
.ctl-nav { grid-column: 2; grid-row: 2; display: grid; grid-template-columns: 171px 171px; }
.nav { gap: 24px; background: linear-gradient(#aaa, #888); }
.nav.next { padding-left: 18px; gap: 18px; }
.nav-text { font-size: 36px; font-weight: 700; color: #3c3c3c; line-height: 38px; }
.dbl { font-size: 28px; color: #444; line-height: 26px; }
.watermark { position: absolute; left: 2402px; top: 4px; width: 158px; height: 70px; }
.wm-box { position: absolute; left: 0; top: 6px; width: 45px; height: 45px; background: rgba(255, 255, 255, .14); border-radius: 4px; }
.wm-star { position: absolute; left: 118px; top: -8px; font-family: "Liberation Sans", sans-serif; font-weight: 700; font-size: 54px; line-height: 54px; color: #d8182a; }
.wm-cn { position: absolute; left: 54px; top: 2px; font-family: "Noto Sans CJK SC", sans-serif; font-stretch: 100%; font-size: 28px; line-height: 36px; color: #fff; text-shadow: 0 0 1px #000; }
.wm-en { position: absolute; left: 54px; top: 34px; font-family: "Liberation Sans", sans-serif; font-stretch: 100%; font-size: 15px; line-height: 18px; color: #fff; text-shadow: 0 0 1px #000; }
```
